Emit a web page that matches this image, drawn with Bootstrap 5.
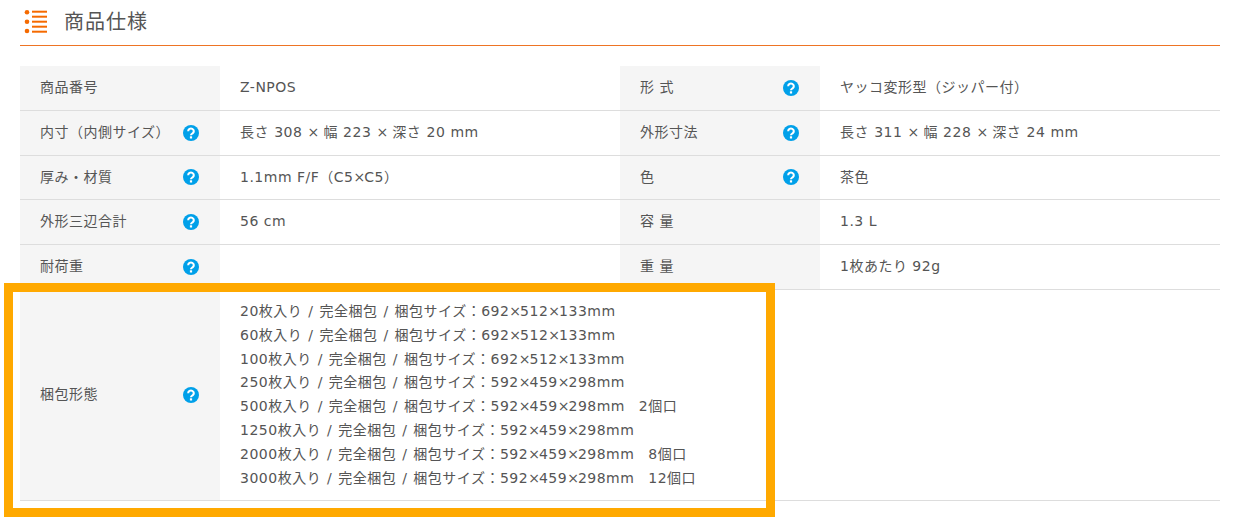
<!DOCTYPE html>
<html lang="ja">
<head>
<meta charset="utf-8">
<title>商品仕様</title>
<link rel="stylesheet" href="https://cdn.jsdelivr.net/npm/bootstrap@5.3.0/dist/css/bootstrap.min.css">
<style>
html,body{height:517px;overflow:hidden;background:#fff}
body{font-family:"DejaVu Sans","Noto Sans CJK JP",sans-serif;color:#555;font-size:14px;letter-spacing:.5px;position:relative}
.spec-wrap{padding:0 27px 0 20px}
.spec-head{height:46px;border-bottom:1px solid #ee7424;padding:0 0 3px 4px;gap:16px}
.spec-head svg{margin-top:2px}
.spec-head h2{font-size:20px;font-weight:400;margin:0;color:#555;font-family:"Noto Sans CJK JP",sans-serif;line-height:1;letter-spacing:1px}
.spec-table{margin-top:20px;width:1200px;table-layout:fixed;border-collapse:collapse}
.spec-table th,.spec-table td{font-weight:400;padding:10px 20px;border-bottom:1px solid #ddd;vertical-align:middle;color:#555;font-size:14px;line-height:1.7}
.spec-table th{background:#f5f5f5;width:200px}
.spec-table td{width:400px}
.spec-label{display:flex;justify-content:space-between;align-items:center}
.spec-help{width:16px;height:16px;flex:none;margin-right:1px;display:block}
.spec-times{letter-spacing:-1px}
.spec-size{word-spacing:.2px}
.spec-pack{word-spacing:1px}
.spec-tail{word-spacing:0;margin-left:-1px}
.spec-mark{position:absolute;left:4px;top:283px;width:771px;height:234px;border:9px solid #ffa900;pointer-events:none}
</style>
</head>
<body>
<div class="spec-wrap">
  <div class="spec-head d-flex align-items-center">
    <svg width="24" height="24" viewBox="0 0 24 24" aria-hidden="true">
      <g fill="#f56a00"><circle cx="3" cy="2.3" r="2.3"/><circle cx="3" cy="11.7" r="2.3"/><circle cx="3" cy="21" r="2.3"/>
      <rect x="8" y="0.7" width="15" height="2"/><rect x="8" y="5.7" width="15" height="2"/><rect x="8" y="10.7" width="15" height="2"/><rect x="8" y="15.7" width="15" height="2"/><rect x="8" y="20.7" width="15" height="2"/></g>
    </svg>
    <h2>商品仕様</h2>
  </div>
  <table class="spec-table">
    <tbody>
      <tr>
        <th>商品番号</th><td>Z-NPOS</td>
        <th><div class="spec-label">形 式<svg class="spec-help" viewBox="0 0 16 16"><use href="#h"/></svg></div></th><td>ヤッコ変形型（ジッパー付）</td>
      </tr>
      <tr>
        <th><div class="spec-label">内寸（内側サイズ）<svg class="spec-help" viewBox="0 0 16 16"><use href="#h"/></svg></div></th><td class="spec-size">長さ 308 <span class="spec-times">×</span> 幅 223 <span class="spec-times">×</span> 深さ 20 mm</td>
        <th><div class="spec-label">外形寸法<svg class="spec-help" viewBox="0 0 16 16"><use href="#h"/></svg></div></th><td class="spec-size">長さ 311 <span class="spec-times">×</span> 幅 228 <span class="spec-times">×</span> 深さ 24 mm</td>
      </tr>
      <tr>
        <th><div class="spec-label">厚み・材質<svg class="spec-help" viewBox="0 0 16 16"><use href="#h"/></svg></div></th><td>1.1mm F/F（C5<span class="spec-times">×</span>C5）</td>
        <th><div class="spec-label">色<svg class="spec-help" viewBox="0 0 16 16"><use href="#h"/></svg></div></th><td>茶色</td>
      </tr>
      <tr>
        <th><div class="spec-label">外形三辺合計<svg class="spec-help" viewBox="0 0 16 16"><use href="#h"/></svg></div></th><td>56 cm</td>
        <th>容 量</th><td>1.3 L</td>
      </tr>
      <tr>
        <th><div class="spec-label">耐荷重<svg class="spec-help" viewBox="0 0 16 16"><use href="#h"/></svg></div></th><td></td>
        <th>重 量</th><td>1枚あたり 92g</td>
      </tr>
      <tr>
        <th><div class="spec-label">梱包形態<svg class="spec-help" viewBox="0 0 16 16"><use href="#h"/></svg></div></th>
        <td class="text-nowrap spec-pack">20枚入り / 完全梱包 / 梱包サイズ：692<span class="spec-times">×</span>512<span class="spec-times">×</span>133mm<br>60枚入り / 完全梱包 / 梱包サイズ：692<span class="spec-times">×</span>512<span class="spec-times">×</span>133mm<br>100枚入り / 完全梱包 / 梱包サイズ：692<span class="spec-times">×</span>512<span class="spec-times">×</span>133mm<br>250枚入り / 完全梱包 / 梱包サイズ：592<span class="spec-times">×</span>459<span class="spec-times">×</span>298mm<br>500枚入り / 完全梱包 / 梱包サイズ：592<span class="spec-times">×</span>459<span class="spec-times">×</span>298mm<span class="spec-tail">&nbsp;&nbsp; 2個口</span><br>1250枚入り / 完全梱包 / 梱包サイズ：592<span class="spec-times">×</span>459<span class="spec-times">×</span>298mm<br>2000枚入り / 完全梱包 / 梱包サイズ：592<span class="spec-times">×</span>459<span class="spec-times">×</span>298mm<span class="spec-tail">&nbsp;&nbsp; 8個口</span><br>3000枚入り / 完全梱包 / 梱包サイズ：592<span class="spec-times">×</span>459<span class="spec-times">×</span>298mm<span class="spec-tail">&nbsp;&nbsp; 12個口</span></td>
        <td colspan="2"></td>
      </tr>
    </tbody>
  </table>
</div>
<div class="spec-mark"></div>
<svg width="0" height="0" class="d-block position-absolute"><defs><g id="h"><circle cx="8" cy="8" r="8" fill="#00a0e9"/><path d="M5.2 6.2a2.8 2.6 0 1 1 4.4 2.1c-1 .7-1.6 1-1.6 2" fill="none" stroke="#fff" stroke-width="2.1"/><rect x="6.9" y="11.3" width="2.2" height="2.2" fill="#fff"/></g></defs></svg>
</body>
</html>
